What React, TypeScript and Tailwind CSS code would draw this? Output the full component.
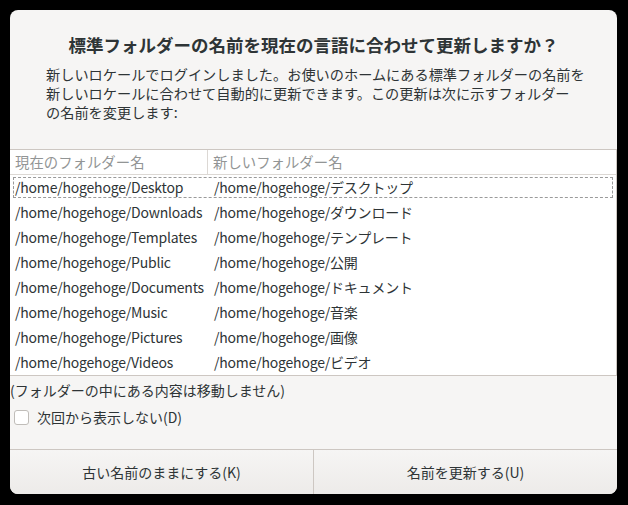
import React from 'react';

const rows: [string, string][] = [
  ['/home/hogehoge/Desktop', '/home/hogehoge/デスクトップ'],
  ['/home/hogehoge/Downloads', '/home/hogehoge/ダウンロード'],
  ['/home/hogehoge/Templates', '/home/hogehoge/テンプレート'],
  ['/home/hogehoge/Public', '/home/hogehoge/公開'],
  ['/home/hogehoge/Documents', '/home/hogehoge/ドキュメント'],
  ['/home/hogehoge/Music', '/home/hogehoge/音楽'],
  ['/home/hogehoge/Pictures', '/home/hogehoge/画像'],
  ['/home/hogehoge/Videos', '/home/hogehoge/ビデオ'],
];

export default function App() {
  return (
    <div
      className="w-[628px] h-[505px] bg-black pt-[10px] pl-[10px] text-[#2e3436]"
      style={{ fontFamily: '"Noto Sans CJK JP", "Noto Sans", sans-serif' }}
    >
      <div className="w-[607px] h-[484px] rounded-[8px] bg-[#f6f5f4] flex flex-col overflow-hidden">
        <div className="pt-[23px] text-center text-[17.5px] font-bold leading-[24px] whitespace-nowrap">
          標準フォルダーの名前を現在の言語に合わせて更新しますか？
        </div>
        <p className="mt-[8px] px-[36px] text-[14.2px] leading-[19px] whitespace-nowrap">
          新しいロケールでログインしました。お使いのホームにある標準フォルダーの名前を
          <br />
          新しいロケールに合わせて自動的に更新できます。この更新は次に示すフォルダー
          <br />
          の名前を変更します:
        </p>

        <div className="mt-[27px] bg-white border-t border-b border-r border-[#cdc7c2] text-[14px]">
          <div className="flex h-[25px] border-b border-[#dcd8d4] text-[#929595] text-[14.4px]">
            <div className="w-[198px] pl-[5px] border-r border-[#dcd8d4] flex items-center">現在のフォルダー名</div>
            <div className="flex-1 pl-[5px] flex items-center">新しいフォルダー名</div>
          </div>
          {rows.map(([oldName, newName], i) => (
            <div key={oldName} className="h-[25px] px-[3px] py-[2px] tracking-[-0.2px]">
              <div
                className={`flex h-full items-center ${i === 0 ? 'border border-dashed border-[#9a9a9a]' : 'border border-transparent'}`}
              >
                <div className="w-[200px] pl-[1px] whitespace-nowrap">{oldName}</div>
                <div className="flex-1 whitespace-nowrap">{newName}</div>
              </div>
            </div>
          ))}
        </div>

        <div className="mt-[4px] text-[14px] leading-[20px]">(フォルダーの中にある内容は移動しません)</div>
        <label className="mt-[7px] ml-[4px] flex items-center gap-[8px] text-[14px] leading-[20px]">
          <span className="w-[15px] h-[15px] rounded-[3px] border border-[#c0bdb9] bg-white" />
          次回から表示しない(D)
        </label>

        <div className="mt-auto h-[45px] flex border-t border-[#cdc7c2] bg-gradient-to-b from-[#f6f5f4] to-[#edebe9] text-[14px]">
          <button className="flex-1 flex items-center justify-center border-r border-[#cdc7c2]">古い名前のままにする(K)</button>
          <button className="flex-1 flex items-center justify-center">名前を更新する(U)</button>
        </div>
      </div>
    </div>
  );
}
